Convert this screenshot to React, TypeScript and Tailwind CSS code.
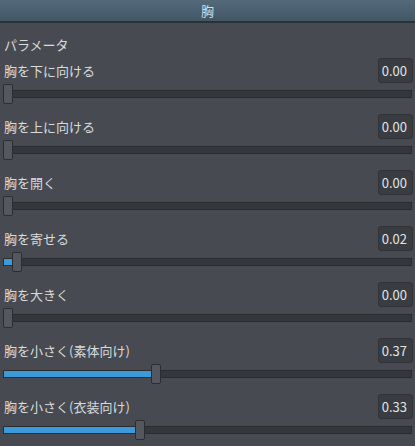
const rows = [
  { label: "胸を下に向ける", value: 0.0 },
  { label: "胸を上に向ける", value: 0.0 },
  { label: "胸を開く", value: 0.0 },
  { label: "胸を寄せる", value: 0.02 },
  { label: "胸を大きく", value: 0.0 },
  { label: "胸を小さく(素体向け)", value: 0.37 },
  { label: "胸を小さく(衣装向け)", value: 0.33 },
];

function Slider({ value }: { value: number }) {
  // usable travel is track width minus the thumb
  const left = Math.round(value * 398);
  return (
    <div className="flex items-center h-[20px] mt-[1px] ml-[3px] mr-[3px]">
      {left > 0 && (
        <div
          className="h-[8px] bg-[#34373b] border border-r-0 border-[#2a2c30] flex items-center"
          style={{ width: left + 1 }}
        >
          <div className="h-[6px] w-full bg-[#3d9ad8]" />
        </div>
      )}
      <div className="w-[10px] h-[20px] shrink-0 bg-[#54585e] border border-[#2b2d31] rounded-[2px]" />
      <div className="flex-1 h-[8px] bg-[#34373b] border border-l-0 border-[#2a2c30]" />
    </div>
  );
}

export default function App() {
  return (
    <div
      className="w-[415px] h-[446px] overflow-hidden bg-[#474b51] text-[#d9dbdd] text-[13px]"
      style={{ fontFamily: '"Noto Sans CJK JP", "Noto Sans", sans-serif' }}
    >
      <div className="h-[23px] border-b-2 border-[#2d3034] bg-gradient-to-b from-[#536a7b] to-[#425766] flex items-center justify-center text-[#d4dbe1]">
        胸
      </div>
      <div className="pt-[12px]">
        <div className="h-[20px] leading-[20px] pl-[4px]">パラメータ</div>
        <div className="flex flex-col gap-[10px] mt-[3px]">
          {rows.map((r) => (
            <div key={r.label}>
              <div className="flex items-center justify-between h-[25px] pl-[4px] pr-[2px]">
                <span>{r.label}</span>
                <div className="w-[35px] h-[25px] rounded-[3px] bg-[#393c41] border border-[#303337] flex items-center justify-end pr-[5px] text-[#e2e4e6]">
                  {r.value.toFixed(2)}
                </div>
              </div>
              <Slider value={r.value} />
            </div>
          ))}
        </div>
      </div>
    </div>
  );
}
